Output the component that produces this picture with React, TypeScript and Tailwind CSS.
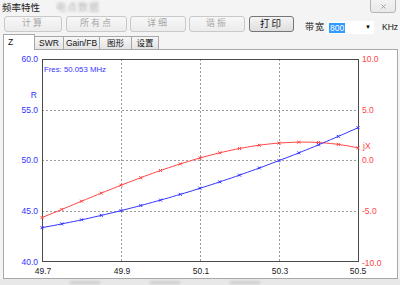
import React from 'react';
import { X } from 'lucide-react';

// plot box in page coordinates
const PX0 = 42;
const PX1 = 358;
const PY0 = 59;
const PY1 = 261;

const xOf = (t: number) => PX0 + t * (PX1 - PX0);
const yR = (r: number) => PY0 + ((60 - r) * (PY1 - PY0)) / 20;
const yJ = (j: number) => PY0 + ((10 - j) * (PY1 - PY0)) / 20;

const rFn = (t: number) => 43.3 + 5.7 * t + 4.2 * t * t;
const jFn = (t: number) => -5.7 + 12.833 * t + 1.8 * t * t - 7.733 * t * t * t;

const steps = Array.from({ length: 17 }, (_, i) => i / 16);
const fine = Array.from({ length: 81 }, (_, i) => i / 80);

function Marker({ x, y, color }: { x: number; y: number; color: string }) {
  return (
    <path
      d={`M${x - 1.5} ${y - 1.5}L${x + 1.5} ${y + 1.5}M${x - 1.5} ${y + 1.5}L${x + 1.5} ${y - 1.5}`}
      stroke={color}
      strokeWidth={1}
    />
  );
}

function Chart() {
  const blue = '#3434ff';
  const red = '#ff4545';
  const rPts = fine.map((t) => `${xOf(t).toFixed(1)},${yR(rFn(t)).toFixed(1)}`).join(' ');
  const jPts = fine.map((t) => `${xOf(t).toFixed(1)},${yJ(jFn(t)).toFixed(1)}`).join(' ');
  const grid = '#9a9a9a';
  const lbl = { fontFamily: '"Liberation Sans", Arial, sans-serif', fontSize: 8.5 };
  return (
    <svg width={393} height={228} viewBox="4 50 393 228" className="block">
      {/* grid */}
      {[121, 200, 279].map((x) => (
        <line key={x} x1={x + 0.5} y1={PY0} x2={x + 0.5} y2={PY1} stroke={grid} strokeDasharray="2 2" />
      ))}
      {[110, 160, 211].map((y) => (
        <line key={y} x1={PX0} y1={y + 0.5} x2={PX1} y2={y + 0.5} stroke={grid} strokeDasharray="2 2" />
      ))}
      <rect x={PX0 + 0.5} y={PY0 + 0.5} width={PX1 - PX0} height={PY1 - PY0} fill="none" stroke="#4a4a4a" />

      {/* curves */}
      <polyline points={jPts} fill="none" stroke={red} strokeWidth={1} />
      <polyline points={rPts} fill="none" stroke={blue} strokeWidth={1} />
      {steps.map((t) => (
        <Marker key={'j' + t} x={xOf(t)} y={yJ(jFn(t))} color={red} />
      ))}
      {steps.map((t) => (
        <Marker key={'r' + t} x={xOf(t)} y={yR(rFn(t))} color={blue} />
      ))}

      {/* left axis */}
      {[
        ['60.0', 59],
        ['55.0', 110],
        ['50.0', 160],
        ['45.0', 211],
        ['40.0', 262],
      ].map(([s, y]) => (
        <text key={s} x={38} y={(y as number) + 3} textAnchor="end" fill={blue} style={lbl}>
          {s}
        </text>
      ))}
      <text x={37} y={98} textAnchor="end" fill={blue} style={lbl}>
        R
      </text>

      {/* right axis */}
      {[
        ['10.0', 59],
        ['5.0', 110],
        ['0.0', 160],
        ['-5.0', 211],
        ['-10.0', 263],
      ].map(([s, y]) => (
        <text key={s} x={362} y={(y as number) + 3} fill={red} style={lbl}>
          {s}
        </text>
      ))}
      <text x={363} y={149} fill={red} style={lbl}>
        jX
      </text>

      {/* bottom axis */}
      {[
        ['49.7', 43],
        ['49.9', 122],
        ['50.1', 201],
        ['50.3', 280],
        ['50.5', 358],
      ].map(([s, x]) => (
        <text key={s} x={x as number} y={274} textAnchor="middle" fill="#222" style={lbl}>
          {s}
        </text>
      ))}

      <text x={44} y={72} fill={blue} style={{ ...lbl, fontSize: 7.8 }}>
        Fres: 50.053 MHz
      </text>
    </svg>
  );
}

export default function App() {
  const cjk = "font-['Liberation_Sans','Noto_Sans_CJK_SC',sans-serif]";
  const btnOff =
    'h-[16px] flex items-center justify-center rounded-[3px] border border-[#c9c9c9] ' +
    'bg-gradient-to-b from-[#f7f7f7] to-[#ececec] text-[9px] text-[#a8a8a8] tracking-[2px]';
  const tabOff =
    'h-[13px] flex items-center justify-center border border-[#a8a8a8] border-b-0 ' +
    'bg-gradient-to-b from-[#f7f7f7] to-[#e4e4e4] text-[8.5px] text-[#111] -ml-px';

  return (
    <div className={`relative w-[400px] h-[285px] overflow-hidden bg-[#f4f4f4] ${cjk}`}>
      {/* title strip */}
      <div className="h-[16px] flex items-start">
        <div className="pl-[2px] pt-[1px] text-[9.5px] leading-[13px] text-[#222]">频率特性</div>
        <div className="ml-[16px] pt-[3px] text-[10px] leading-[10px] text-[#b8b8b8] blur-[1.2px] tracking-[1px]">
          电点数据
        </div>
        <div className="absolute right-[4px] -top-[8px] w-[26px] h-[21px] rounded-[3px] border border-[#b5b5b5] bg-gradient-to-b from-[#fafafa] to-[#e8e8e8] flex items-end justify-center pb-[2px]">
          <X size={7} strokeWidth={2.5} color="#8a8a8a" />
        </div>
      </div>

      {/* button row */}
      <div className="h-[18px] flex items-start">
        <div className={btnOff + ' ml-[4px] w-[58px]'}>计算</div>
        <div className={btnOff + ' ml-[4px] w-[61px]'}>所有点</div>
        <div className={btnOff + ' ml-[3px] w-[56px]'}>详细</div>
        <div className={btnOff + ' ml-[3px] w-[56px]'}>谐振</div>
        <div className="ml-[4px] w-[45px] h-[16px] flex items-center justify-center rounded-[3px] border border-[#767676] bg-gradient-to-b from-[#f4f4f4] to-[#dedede] text-[9.5px] text-[#111] tracking-[2px]">
          打印
        </div>
        <div className="ml-[11px] mt-[6px] text-[9px] leading-[11px] text-[#111] tracking-[1px]">带宽</div>
        <div className="ml-[2px] mt-[5px] w-[47px] h-[13px] bg-white flex items-center pl-[2px]">
          <span className="bg-[#3399ff] text-white text-[8.5px] leading-[10px] px-[1px] font-['Liberation_Sans',sans-serif]">
            800
          </span>
          <span className="ml-auto mr-[3px] text-[6px] text-black">▼</span>
        </div>
        <div className="ml-[8px] mt-[6px] text-[8.5px] leading-[11px] text-[#111]">KHz</div>
      </div>

      {/* tabs */}
      <div className="h-[15px] flex items-end pl-[3px]">
        <div className="relative z-10 h-[16px] -mb-px w-[32px] border border-[#a8a8a8] border-b-0 bg-white text-[8.5px] leading-[10px] pl-[4px] pt-[2px] text-[#111]">
          Z
        </div>
        <div className={tabOff + ' w-[30px]'}>SWR</div>
        <div className={tabOff + ' w-[37px]'}>Gain/FB</div>
        <div className={tabOff + ' w-[33px]'}>图形</div>
        <div className={tabOff + ' w-[28px]'}>设置</div>
      </div>

      {/* panel */}
      <div className="ml-[3px] w-[395px] h-[230px] border border-[#a8a8a8] bg-white">
        <Chart />
      </div>

      {/* bottom strip */}
      <div className="h-[6px] bg-[#e8e8e8] flex items-center gap-[50px] pl-[70px]">
        <div className="w-[30px] h-[3px] bg-[#cfcfcf] blur-[1px]" />
        <div className="w-[30px] h-[3px] bg-[#cfcfcf] blur-[1px]" />
        <div className="w-[30px] h-[3px] bg-[#cfcfcf] blur-[1px]" />
      </div>
    </div>
  );
}
